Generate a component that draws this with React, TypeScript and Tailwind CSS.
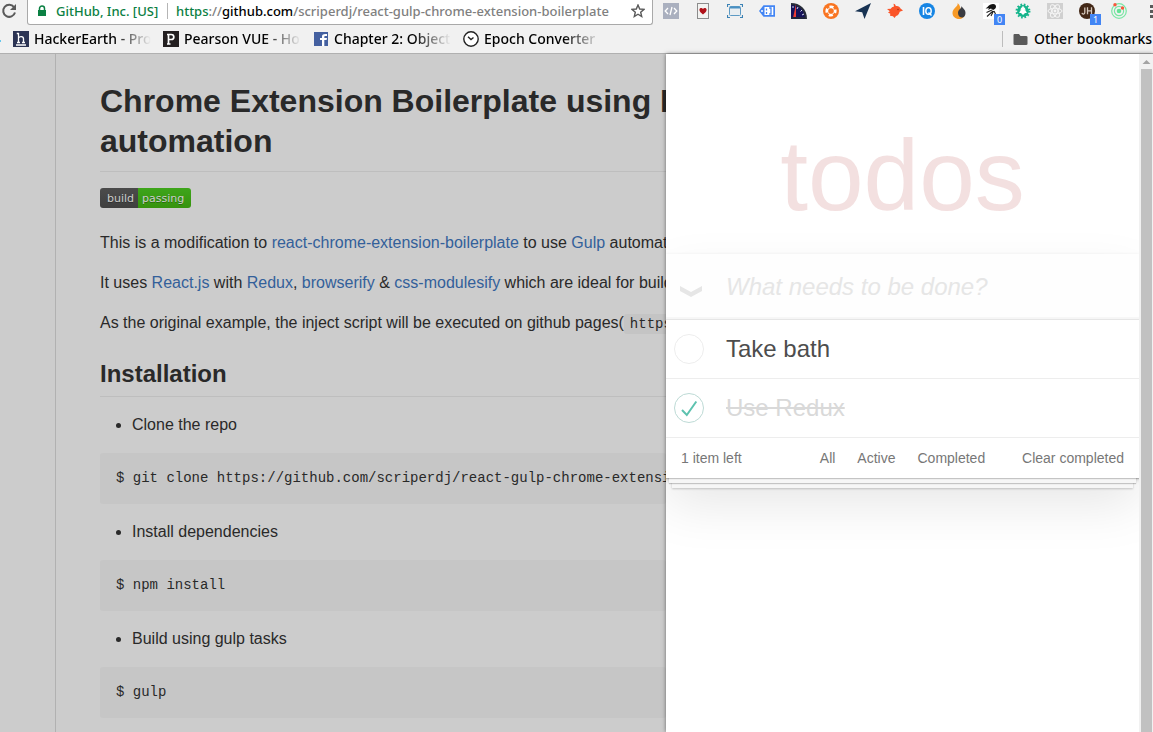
import type { ReactNode } from "react";

function Glyph({ children, label }: { children: ReactNode; label: string }) {
  return (
    <button type="button" aria-label={label} className="relative flex h-4 w-4 shrink-0 items-center justify-center">
      <svg viewBox="0 0 16 16" className="h-4 w-4" aria-hidden="true">
        {children}
      </svg>
    </button>
  );
}

function Badged({ children, label, count }: { children: ReactNode; label: string; count: string }) {
  return (
    <div className="relative h-4 w-4 shrink-0">
      <Glyph label={label}>{children}</Glyph>
      <span className="absolute top-[11px] left-[11px] flex h-[11px] w-[11px] items-center justify-center bg-[#4285f4] font-['Noto_Sans',sans-serif] text-[9px] leading-none text-white">
        {count}
      </span>
    </div>
  );
}

function Extensions() {
  return (
    <div className="flex shrink-0 gap-4 pt-[3px]">
      <Glyph label="Source viewer">
        <rect width="16" height="16" fill="#aab0bf" />
        <path d="M5 5 2.2 8 5 11M11 5l2.8 3L11 11M9 4 7 12" fill="none" stroke="#fff" strokeWidth="1.3" />
      </Glyph>
      <Glyph label="Solitaire">
        <rect x="2.5" y=".5" width="11" height="15" fill="#f3f3f1" stroke="#8c8c8c" />
        <path d="M8 11.5C6 9.8 4.4 8.6 4.4 6.8 4.4 4.8 7 4.3 8 6c1-1.7 3.6-1.2 3.6.8 0 1.8-1.6 3-3.6 4.7z" fill="#b01118" />
      </Glyph>
      <Glyph label="Window resizer">
        <path d="M.5 4V1.500H3M13 1.500h2.500V4M.5 12v2.500H3M13 14.500h2.500V12" fill="none" stroke="#3d83b5" strokeWidth="1.200" />
        <rect x="2.500" y="3.500" width="11" height="9" rx="1" fill="#e9eef1" stroke="#5d9ac4" />
        <path d="M3 4.500h10" stroke="#4a90c2" strokeWidth="2" />
      </Glyph>
      <Glyph label="Tag">
        <path d="M0 8 4.500 2.200H16v11.600H4.500z" fill="#4285f4" />
        <rect x="5.500" y="4" width="8.800" height="8" fill="#fff" />
        <circle cx="3" cy="8" r="1" fill="#fff" />
        <path d="M7.500 5.500v2M7.500 9v2M10.200 5H12v6h-1.800" fill="none" stroke="#4285f4" strokeWidth="1.300" />
      </Glyph>
      <Glyph label="Page speed">
        <path d="M0 0c9 0 16 6 16 16H0z" fill="#272d38" />
        <path d="M0 2c8 0 13 5 14 13H0z" fill="#17145c" />
        <path d="M2 3v2M7 4 6 6M11 7 9.500 8.500M13 11l-2 1" stroke="#d9dff1" strokeWidth="1" />
        <path d="m5 1-3 14 3-1z" fill="#f03b34" />
        <path d="M0 14h14v2H0z" fill="#20243c" />
      </Glyph>
      <Glyph label="Lifebuoy">
        <circle cx="8" cy="8" r="8" fill="#f97522" />
        <circle cx="8" cy="8" r="4.300" fill="none" stroke="#fff" strokeWidth="2.600" strokeDasharray="4 2.750" strokeDashoffset="2" />
        <circle cx="8" cy="8" r="3.400" fill="none" stroke="#fff" strokeWidth=".8" />
      </Glyph>
      <Glyph label="Navigator">
        <path d="M16 0 0 8.200l7.200 1L9.500 16z" fill="#183353" />
      </Glyph>
      <Glyph label="Bird">
        <path d="M6.500.800C8 1 8.500 2 8.800 3c2.400-.4 4 .6 4.700 2.500l2.500 2-3.300 1.300C12.200 11 11 12.500 9 13l-1.500 2L6 13.300 3 12.800l.3-2L1 9.500 2.800 8.300 0 6l3.800-.3L5 4.200l2-.7z" fill="#fa5529" />
        <circle cx="11" cy="6.500" r=".7" fill="#8f2c1a" />
      </Glyph>
      <Glyph label="IQ">
        <circle cx="8" cy="8" r="8" fill="#1685e4" />
        <path d="M4.500 4v8" stroke="#fff" strokeWidth="1.600" />
        <ellipse cx="9.500" cy="8" rx="2.700" ry="3.400" fill="none" stroke="#fff" strokeWidth="1.400" />
        <path d="m9.500 9.500 3 3" stroke="#fff" strokeWidth="1.400" />
      </Glyph>
      <Glyph label="Flame">
        <path d="M6.500 0C8 3 1.500 5 1.500 10c0 3.500 3 6 6.500 6 3 0 6-2 6-6l-4-3C9 5 9.500 2.500 6.500 0z" fill="#f79a27" />
        <path d="M10.500 3c.3 3-3.500 3-3.500 7 0 3 2 4.500 4 4.500 2 0 3.500-2 3.500-4.500 0-3.500-2.500-4-4-7z" fill="#3a3c42" />
      </Glyph>
      <Badged label="Ink" count="0">
        <rect width="16" height="16" fill="#fff" />
        <path d="M4.500 4C6.500 1 11 0 12.500 2c1.500 2.500-.5 4.500-2.500 5L8 5.500 5 7l1-1.800-3.500.3z" fill="#151515" />
        <path d="M9 7 3.500 9.500M10 8l-6 5.500M10.500 8 8 13m3-5 1.500 3" stroke="#222" strokeWidth="1.100" />
      </Badged>
      <Glyph label="Pine">
        <circle cx="8" cy="8" r="5.900" fill="#16b58c" />
        <circle cx="8" cy="8" r="6.300" fill="none" stroke="#16b58c" strokeWidth="2.300" strokeDasharray="1.650 1.650" />
        <path d="M8 3.500 5.800 6.300h1L4.700 9.500H7V11H9V9.500h2.300L9.200 6.300h1z" fill="#fff" stroke="#fff" strokeLinejoin="round" />
      </Glyph>
      <Glyph label="React developer tools">
        <rect width="16" height="16" fill="#d0d0d0" />
        <g fill="none" stroke="#f5f5f5" strokeWidth="1">
          <ellipse cx="8" cy="8" rx="7" ry="2.800" />
          <ellipse cx="8" cy="8" rx="7" ry="2.800" transform="rotate(60 8 8)" />
          <ellipse cx="8" cy="8" rx="7" ry="2.800" transform="rotate(120 8 8)" />
        </g>
        <circle cx="8" cy="8" r="1.400" fill="#f5f5f5" />
      </Glyph>
      <Badged label="JSON handler" count="1">
        <circle cx="8" cy="8" r="8" fill="#432817" />
        <path d="M5.800 4.500v5c0 2-2.500 2-2.800.3M8.500 4.300v7M12.500 4.300v7M8.500 7.800h4" fill="none" stroke="#d5c8bd" strokeWidth="1.300" />
      </Badged>
      <Glyph label="Orbit">
        <circle cx="8" cy="8" r="7.300" fill="none" stroke="#79e6a4" strokeWidth="1.200" />
        <circle cx="8" cy="8" r="4.600" fill="none" stroke="#79e6a4" strokeWidth="1.200" />
        <circle cx="8" cy="8" r="2.300" fill="#65e296" />
        <circle cx="4" cy="1.800" r="1.700" fill="#f8563b" />
        <circle cx="11.500" cy="5" r="1.700" fill="#f8563b" />
      </Glyph>
    </div>
  );
}

function Bookmark({ icon, children }: { icon: ReactNode; children: ReactNode }) {
  return (
    <a href="#bookmark" className="mr-3 flex w-[138px] shrink-0 items-center gap-[5px]">
      <svg viewBox="0 0 16 16" className="h-4 w-4 shrink-0" aria-hidden="true">
        {icon}
      </svg>
      <span className="min-w-0 flex-1 overflow-hidden whitespace-nowrap [mask-image:linear-gradient(to_right,#000_calc(100%-38px),transparent)]">
        {children}
      </span>
    </a>
  );
}

function BrowserBar() {
  return (
    <header className="h-[54px] shrink-0 overflow-hidden border-b border-[#b0b0b0] bg-[#f1f1f1] font-['Noto_Sans',sans-serif] text-black">
      <div className="flex h-[25px]">
        <button type="button" aria-label="Reload" className="flex w-[27px] shrink-0 pt-[3px] pl-px">
          <svg viewBox="0 0 16 16" className="h-4 w-4" aria-hidden="true">
            <path d="M13 4.200A6 6 0 1 0 14 9.500" fill="none" stroke="#5a5a5a" strokeWidth="2" />
            <path d="M15 1v6H9z" fill="#5a5a5a" />
          </svg>
        </button>
        <div className="flex min-w-0 flex-1 items-start overflow-hidden rounded-b-[3px] border border-t-0 border-[#a9a9a9] bg-white pt-px pl-[9px] text-[13px] leading-5 font-medium whitespace-nowrap">
          <svg viewBox="0 0 10 12" className="mt-1 h-3 w-2.5 shrink-0" aria-hidden="true">
            <path d="M2.500 5V3.500a2.500 2.500 0 0 1 5 0V5" fill="none" stroke="#0b8043" strokeWidth="1.500" />
            <rect x="1" y="5" width="8" height="6" fill="#0b8043" />
          </svg>
          <span className="ml-[9px] w-[111px] shrink-0 text-[#0b8043]">GitHub, Inc. [US]</span>
          <span className="mt-0.5 h-4 w-px shrink-0 bg-[#b5b5b5]" />
          <span className="ml-2 min-w-0 flex-1 overflow-hidden text-[#808080]">
            <span className="text-[#0b8043]">https</span>://<span className="text-black">github.com</span>
            /scriperdj/react-gulp-chrome-extension-boilerplate
          </span>
          <button type="button" aria-label="Bookmark this page" className="mt-[3px] mr-[7px] shrink-0">
            <svg viewBox="0 0 14 14" className="h-3.5 w-3.5" aria-hidden="true">
              <path d="m7 1 1.700 4 4.300.4-3.300 2.800 1 4.300L7 10.200l-3.700 2.300 1-4.300L1 5.400 5.300 5z" fill="none" stroke="#5a5a5a" strokeWidth="1.400" />
            </svg>
          </button>
        </div>
        <div className="w-2.5 shrink-0" />
        <Extensions />
        <button type="button" aria-label="Menu" className="flex w-[26px] shrink-0 items-start overflow-hidden pt-1 pl-[22px]">
          <svg viewBox="0 0 4 14" className="h-3.5 w-1 shrink-0" aria-hidden="true">
            <path d="M1 1h3v3H1zM1 6h3v3H1zM1 11h3v3H1z" fill="#5a5a5a" />
          </svg>
        </button>
      </div>
      <nav aria-label="Bookmarks" className="flex h-7 items-center text-[14px] leading-5 font-medium">
        <span className="mt-1 mr-3 h-0.5 w-px shrink-0 bg-[#67c8ec]" />
        <Bookmark
          icon={
            <>
              <rect width="16" height="16" fill="#2c3454" />
              <path d="M5.500 2v9.500M5.500 7c1-2 5-2 5 .8v3.700M3.800 2.500h2M4 11.500h3M9 11.500h3M3 14h10" fill="none" stroke="#fff" strokeWidth="1.300" />
            </>
          }
        >
          HackerEarth - Pro
        </Bookmark>
        <Bookmark
          icon={
            <>
              <rect width="16" height="16" fill="#231f20" />
              <path d="M5.500 13V3.500h2.700c3.500 0 3.500 5 0 5H5.500M4 13h3.500M4 3.500h2" fill="none" stroke="#fff" strokeWidth="1.700" />
            </>
          }
        >
          Pearson VUE - Ho
        </Bookmark>
        <Bookmark
          icon={
            <>
              <path d="M1 1h14v14H1z" fill="#4460a0" />
              <path d="M9 15V9H7V7h2V5.500C9 3.500 10 2.700 14 3v2h-1.500c-1 0-1.200.4-1.200 1.200V7H14l-.4 2h-2.300v6z" fill="#fff" />
            </>
          }
        >
          Chapter 2: Object
        </Bookmark>
        <Bookmark
          icon={
            <>
              <circle cx="8" cy="8" r="7.200" fill="#fff" stroke="#222" strokeWidth="1.400" />
              <path d="M5 5.800 8 8.500l2.500-2" fill="none" stroke="#222" strokeWidth="1.400" />
            </>
          }
        >
          Epoch Converter
        </Bookmark>
        <div className="flex-1" />
        <span className="mr-2.5 h-4 w-px shrink-0 bg-[#bdbdbd]" />
        <a href="#other" className="flex w-[140px] shrink-0 items-center gap-1.5 overflow-hidden whitespace-nowrap">
          <svg viewBox="0 0 15 13" className="h-[13px] w-[15px] shrink-0" aria-hidden="true">
            <path d="M1.500 1H6l1.500 2H13q1.500 0 1.500 1v7q0 1-1.500 1H2q-1.500 0-1.500-1V2q0-1 1-1z" fill="#5a5a5a" />
          </svg>
          Other bookmarks
        </a>
      </nav>
    </header>
  );
}

function Link({ children }: { children: ReactNode }) {
  return (
    <a href="#docs" className="text-[#33609a]">
      {children}
    </a>
  );
}

function Step({ title, command }: { title: string; command: string }) {
  return (
    <>
      <ul className="mt-4 list-disc pl-8">
        <li>{title}</li>
      </ul>
      <pre className="mt-4 rounded-[3px] bg-[#c6c6c6] p-4 font-['Liberation_Mono',monospace] text-[14px] leading-[19px]">
        {command}
      </pre>
    </>
  );
}

function Readme() {
  return (
    <main className="min-w-0 flex-1 overflow-hidden bg-[#ccc] pl-[55px]">
      <article className="min-h-full border-l border-[#b1b1b1] pt-[27px] pl-11 text-[16px] leading-6 whitespace-nowrap text-[#292929]">
        <h1 className="border-b border-[#bebebe] pb-2.5 text-[32px] leading-10 font-bold">
          Chrome Extension Boilerplate using React
          <br />
          automation
        </h1>
        <div className="mt-4 flex h-5 w-[91px] overflow-hidden rounded-[3px] font-['DejaVu_Sans',sans-serif] text-[11px] leading-[21px] text-[#ccc] [text-shadow:0_1px_0_rgba(0,0,0,0.3)]">
          <span className="w-[38px] bg-linear-to-b from-[#4b4b4b] to-[#3f3f3f] pl-[7px]">build</span>
          <span className="flex-1 bg-linear-to-b from-[#3ea51b] to-[#36930d] pl-1">passing</span>
        </div>
        <p className="mt-[23px]">
          This is a modification to <Link>react-chrome-extension-boilerplate</Link> to use <Link>Gulp</Link> automation
        </p>
        <p className="mt-4">
          It uses <Link>React.js</Link> with <Link>Redux</Link>, <Link>browserify</Link> &amp;{" "}
          <Link>css-modulesify</Link> which are ideal for building
        </p>
        <p className="mt-4">
          As the original example, the inject script will be executed on github pages(
          <code className="rounded-[3px] bg-[#c4c4c4] px-1.5 py-0.5 font-['Liberation_Mono',monospace] text-[14px] leading-4">
            https://
          </code>
        </p>
        <h2 className="mt-6 border-b border-[#bebebe] pb-2 text-[24px] leading-[29px] font-bold">Installation</h2>
        <Step title="Clone the repo" command="$ git clone https://github.com/scriperdj/react-gulp-chrome-extension" />
        <Step title="Install dependencies" command="$ npm install" />
        <Step title="Build using gulp tasks" command="$ gulp" />
      </article>
    </main>
  );
}

function Todo({ text, done }: { text: string; done: boolean }) {
  return (
    <li className="flex h-[59px] items-center border-b border-[#ededed] pl-2">
      <label className="flex items-center gap-[22px]">
        <input type="checkbox" defaultChecked={done} className="peer sr-only" />
        <svg viewBox="0 0 30 30" className="h-[30px] w-[30px] shrink-0" aria-hidden="true">
          <circle cx="15" cy="15" r="14.500" fill="none" stroke={done ? "#bddad5" : "#ededed"} />
          {done && <path d="m8 17 4.800 5L22.300 8.500" fill="none" stroke="#5dc2af" strokeWidth="2" />}
        </svg>
        <span className={done ? "text-[#d9d9d9] line-through" : "text-[#4d4d4d]"}>{text}</span>
      </label>
    </li>
  );
}

function TodoPanel() {
  return (
    <aside className="relative z-10 flex w-[487px] max-w-full shrink-0 bg-white shadow-[0_0_4px_rgba(0,0,0,0.5)]">
      <div className="min-w-0 flex-1 overflow-hidden">
        <h1 className="flex h-[200px] items-center justify-center pt-[42px] text-[100px] leading-[112px] text-[#af2f2f]/15">
          todos
        </h1>
        <section className="bg-white shadow-[0_2px_4px_0_rgba(0,0,0,0.2),0_25px_50px_0_rgba(0,0,0,0.1)]">
          <div className="flex h-[65px] items-center bg-black/[0.003] pl-3.5 shadow-[inset_0_-2px_1px_rgba(0,0,0,0.03)]">
            <button type="button" aria-label="Mark all as complete" className="mt-2.5 shrink-0">
              <svg viewBox="0 0 22 11" className="h-[11px] w-[22px]" aria-hidden="true">
                <path d="M0 0 11 6 22 0V5L11 11 0 5z" fill="#e6e6e6" />
              </svg>
            </button>
            <input
              aria-label="New todo"
              placeholder="What needs to be done?"
              className="ml-6 min-w-0 flex-1 bg-transparent text-[24px] leading-8 outline-none placeholder:text-[#e6e6e6] placeholder:italic"
            />
          </div>
          <ul className="border-t border-[#e6e6e6] text-[24px] leading-8">
            <Todo text="Take bath" done={false} />
            <Todo text="Use Redux" done />
          </ul>
          <footer className="grid h-10 grid-cols-[1fr_auto_1fr] items-center px-[15px] text-[14px] leading-5 text-[#777] shadow-[0_1px_1px_rgba(0,0,0,0.2),0_8px_0_-3px_#f6f6f6,0_9px_1px_-3px_rgba(0,0,0,0.2),0_16px_0_-6px_#f6f6f6,0_17px_2px_-6px_rgba(0,0,0,0.2)]">
            <span>1 item left</span>
            <nav aria-label="Filters" className="flex gap-[22px]">
              <a href="#all">All</a>
              <a href="#active">Active</a>
              <a href="#completed">Completed</a>
            </nav>
            <button type="button" className="justify-self-end">
              Clear completed
            </button>
          </footer>
        </section>
      </div>
      <div className="flex w-3.5 shrink-0 flex-col items-center bg-[#f1f1f1]" aria-hidden="true">
        <svg viewBox="0 0 14 15" className="h-[15px] w-3.5 shrink-0">
          <path d="m3.500 10 4-4 4 4z" fill="#a3a3a3" />
        </svg>
        <div className="w-[11px] flex-1 bg-[#c1c1c1]" />
      </div>
    </aside>
  );
}

export default function App() {
  return (
    <div className="flex h-screen flex-col overflow-hidden bg-[#ccc] font-['Liberation_Sans',Arial,sans-serif]">
      <BrowserBar />
      <div className="flex min-h-0 flex-1">
        <Readme />
        <TodoPanel />
      </div>
    </div>
  );
}
